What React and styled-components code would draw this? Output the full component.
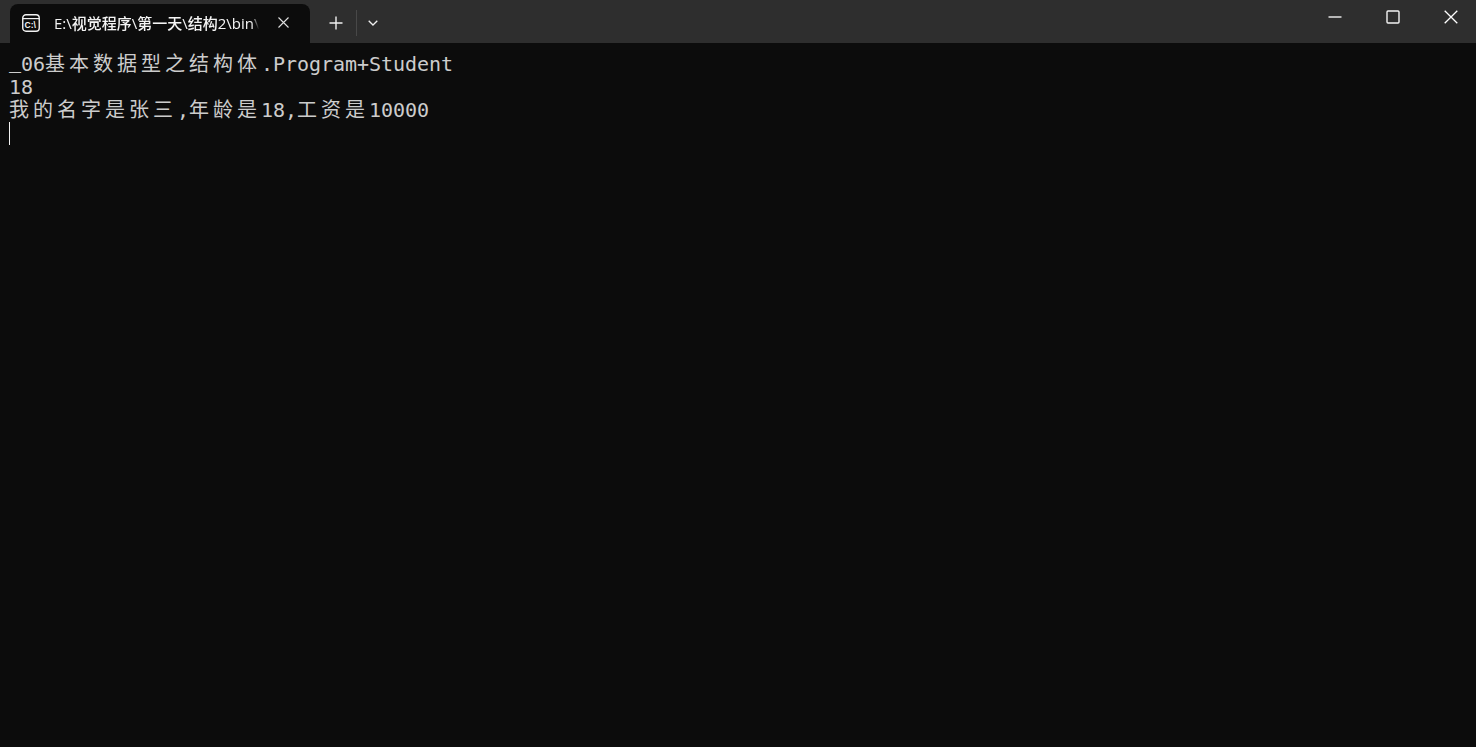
import styled, { createGlobalStyle } from "styled-components";

const output = [
  "_06基本数据型之结构体.Program+Student",
  "18",
  "我的名字是张三,年龄是18,工资是10000",
];

const isWide = (ch) => ch.charCodeAt(0) > 255;

function Line({ text }) {
  return (
    <Row>
      {Array.from(text).map((ch, i) => (
        <Cell key={i} $wide={isWide(ch)} $raised={ch === "_"}>
          {ch}
        </Cell>
      ))}
    </Row>
  );
}

function TerminalIcon() {
  return (
    <svg width="18" height="18" viewBox="0 0 18 18" fill="none">
      <rect x="0.75" y="0.75" width="16.5" height="16.5" rx="3.2" stroke="#f2f2f2" strokeWidth="1.4" />
      <path d="M1 4.6H17" stroke="#f2f2f2" strokeWidth="1.2" />
      <text x="2.6" y="13.6" fontSize="8.5" fontWeight="700" fontFamily="'Liberation Sans', sans-serif" fill="#f6f6f6">
        C:\
      </text>
    </svg>
  );
}

export default function App() {
  return (
    <>
      <GlobalStyle />
      <Window>
        <TitleBar>
          <Tab>
            <TabIcon>
              <TerminalIcon />
            </TabIcon>
            <TabTitle>E:\视觉程序\第一天\结构2\bin\Debug\net6.0\结构2.exe</TabTitle>
            <IconButton $left={19}>
              <svg width="11" height="11" viewBox="0 0 11 11" fill="none">
                <path d="M0.5 0.5L10.5 10.5M10.5 0.5L0.5 10.5" stroke="#e0e0e0" strokeWidth="1.1" />
              </svg>
            </IconButton>
          </Tab>
          <TabActions>
            <IconButton $left={19}>
              <svg width="14" height="14" viewBox="0 0 14 14" fill="none">
                <path d="M7 0.5V13.5M0.5 7H13.5" stroke="#f0f0f0" strokeWidth="1.4" />
              </svg>
            </IconButton>
            <Divider />
            <IconButton $left={11}>
              <svg width="10" height="6" viewBox="0 0 10 6" fill="none">
                <path d="M0.7 0.7L5 5L9.3 0.7" stroke="#f0f0f0" strokeWidth="1.3" />
              </svg>
            </IconButton>
          </TabActions>
          <WindowControls>
            <ControlIcon>
              <svg width="14" height="14" viewBox="0 0 14 14" fill="none">
                <path d="M0.5 7H13.5" stroke="#e4e4e4" strokeWidth="1.5" />
              </svg>
            </ControlIcon>
            <ControlIcon>
              <svg width="14" height="14" viewBox="0 0 14 14" fill="none">
                <rect x="1" y="1" width="12" height="12" rx="1" stroke="#f4f4f4" strokeWidth="1.4" />
              </svg>
            </ControlIcon>
            <ControlIcon>
              <svg width="14" height="14" viewBox="0 0 14 14" fill="none">
                <path d="M0.7 0.7L13.3 13.3M13.3 0.7L0.7 13.3" stroke="#ffffff" strokeWidth="1.3" />
              </svg>
            </ControlIcon>
          </WindowControls>
        </TitleBar>
        <Terminal>
          {output.map((text) => (
            <Line key={text} text={text} />
          ))}
          <Cursor />
        </Terminal>
      </Window>
    </>
  );
}

const GlobalStyle = createGlobalStyle`
  html, body {
    margin: 0;
    padding: 0;
    background: #0c0c0c;
  }
`;

const Window = styled.div`
  width: 1476px;
  height: 747px;
  display: flex;
  flex-direction: column;
  overflow: hidden;
  background: #0c0c0c;
`;

const TitleBar = styled.div`
  height: 43px;
  flex-shrink: 0;
  box-sizing: border-box;
  padding: 4px 0 0 10px;
  display: flex;
  align-items: center;
  background: #2e2e2e;
`;

const Tab = styled.div`
  width: 300px;
  height: 39px;
  box-sizing: border-box;
  padding: 0 21px 2px 12px;
  display: flex;
  align-items: center;
  background: #0c0c0c;
  border-radius: 8px 8px 0 0;
`;

const TabIcon = styled.div`
  width: 18px;
  height: 18px;
  flex-shrink: 0;
  display: flex;
`;

const TabTitle = styled.div`
  width: 205px;
  margin-left: 14px;
  flex-shrink: 0;
  overflow: hidden;
  white-space: nowrap;
  color: #f4f4f4;
  font-family: "Open Sans", "Noto Sans CJK SC", sans-serif;
  font-size: 15px;
  font-weight: 500;
  line-height: 20px;
  mask-image: linear-gradient(to right, #000 198px, transparent 205px);
`;

const TabActions = styled.div`
  padding-bottom: 2px;
  display: flex;
  align-items: center;
`;

const IconButton = styled.div`
  margin-left: ${(props) => props.$left}px;
  display: flex;
  align-items: center;
`;

const Divider = styled.div`
  width: 1px;
  height: 26px;
  margin-left: 13px;
  background: #484848;
`;

const WindowControls = styled.div`
  margin-left: auto;
  margin-top: -4px;
  padding: 2px 18px 12px 0;
  display: flex;
  gap: 44px;
`;

const ControlIcon = styled.div`
  width: 14px;
  height: 14px;
  display: flex;
`;

const Terminal = styled.div`
  flex: 1;
  padding: 10px 0 0 9px;
  color: #cccccc;
  font-family: "DejaVu Sans Mono", "Noto Sans CJK SC", monospace;
  font-size: 20px;
`;

const Row = styled.div`
  height: 23px;
  display: flex;
  line-height: 23px;
`;

const Cell = styled.span`
  width: ${(props) => (props.$wide ? 24 : 12)}px;
  flex-shrink: 0;
  display: block;
  transform: ${(props) => (props.$raised ? "translateY(-3px)" : "none")};
`;

const Cursor = styled.div`
  width: 1px;
  height: 23px;
  background: #f2f2f2;
`;
